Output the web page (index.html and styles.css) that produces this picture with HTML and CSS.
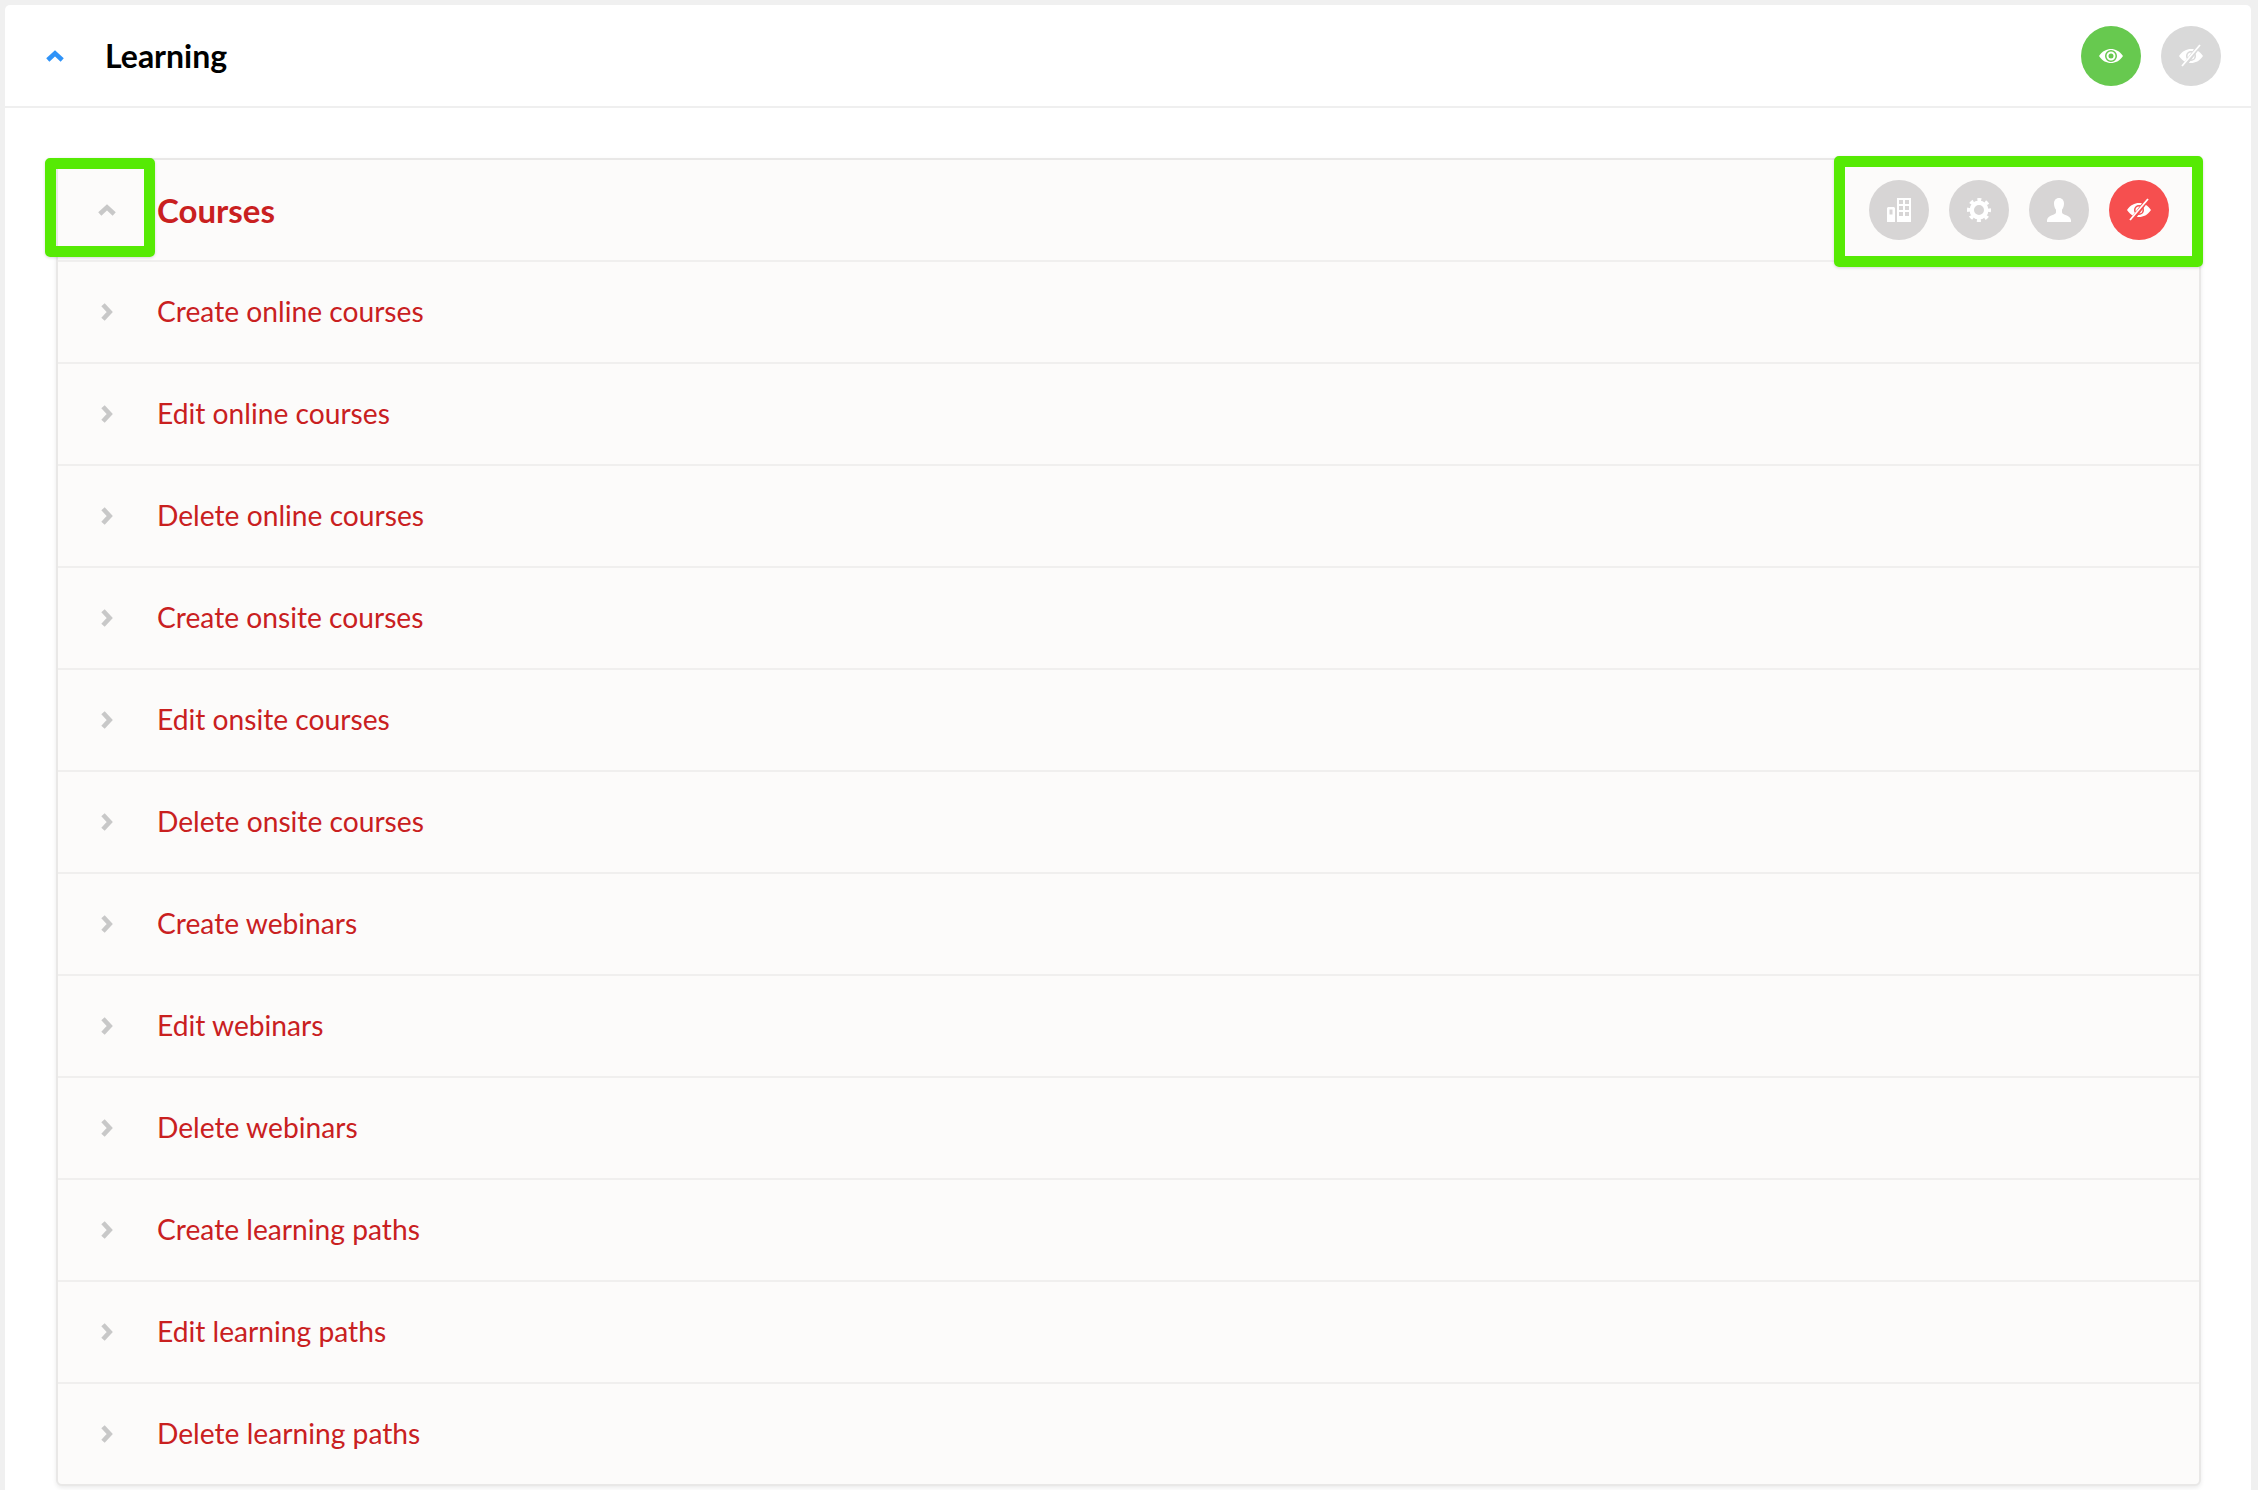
FILE: index.html

```html
<!DOCTYPE html>
<html lang="en">
<head>
    <meta charset="UTF-8">
    <meta name="viewport" content="width=device-width, initial-scale=1.0">
    <title>Learning permissions</title>
    <link rel="stylesheet" href="styles.css">
</head>
<body>
    <svg class="icon-defs" width="0" height="0">
        <symbol id="chevron-up" viewBox="0 0 18 12">
            <path d="M1.800 10L9 3.300l7.200 6.700" fill="none" stroke="currentColor" stroke-width="4.600"/>
        </symbol>
        <symbol id="chevron-right" viewBox="0 0 12 18">
            <path d="M2 1.800L8.700 9 2 16.200" fill="none" stroke="currentColor" stroke-width="4.600"/>
        </symbol>
        <symbol id="eye" viewBox="0 0 24 24">
            <path fill-rule="evenodd" d="M0 12C3.500 7 7.500 5 12 5S20.500 7 24 12C20.500 17 16.500 19 12 19S3.500 17 0 12zM12 6a6 6 0 1 0 0 12a6 6 0 1 0 0-12z"/>
            <path fill-rule="evenodd" d="M12 7.500a4.500 4.500 0 1 0 0 9a4.500 4.500 0 1 0 0-9zM12 9.500a2.500 2.500 0 1 1 0 5a2.500 2.500 0 1 1 0-5z"/>
        </symbol>
        <symbol id="eye-off" viewBox="0 0 24 24">
            <path fill-rule="evenodd" d="M0 12C3.500 7 7.500 5 12 5S20.500 7 24 12C20.500 17 16.500 19 12 19S3.500 17 0 12zM12 7a5 5 0 1 0 0 10a5 5 0 1 0 0-10z"/>
            <path d="M12 8.500a3.500 3.500 0 1 0 0 7a3.500 3.500 0 1 0 0-7z"/>
            <path class="slash-gap" d="M20 2L5 22"/>
            <path class="slash" d="M21 1L3 22"/>
        </symbol>
        <symbol id="building" viewBox="0 0 24 24">
            <path fill-rule="evenodd" d="M1 9h6l1 1v14H0V10zM2.500 11.500v5h3v-5zM10 0h14v24H10zM12 2v4h4V2zM18 2v4h4V2zM12 8v4h4V8zM18 8v4h4V8zM12 14v4h4v-4zM18 14v4h4v-4z"/>
        </symbol>
        <symbol id="gear" viewBox="0 0 24 24">
            <circle cx="12" cy="12" r="7.250" fill="none" stroke="currentColor" stroke-width="4.500"/>
            <circle class="gear-teeth" cx="12" cy="12" r="10.500" fill="none" stroke="currentColor" stroke-width="3"/>
        </symbol>
        <symbol id="person" viewBox="0 0 24 24">
            <path d="M12 0c3.200 0 5 2.400 5 5.500 0 2.500-.8 4.800-2 6.200v2.500c0 1.300 1.500 2 3.500 2.900 2.500 1 4.800 2 5.500 4.900v2H0v-2c.7-2.900 3-3.900 5.500-4.900C7.500 16.200 9 15.500 9 14.200v-2.500C7.800 10.300 7 8 7 5.500 7 2.400 8.800 0 12 0z"/>
        </symbol>
    </svg>

    <main class="card">
        <header class="card-header">
            <svg class="chevron chevron-blue"><use href="#chevron-up"/></svg>
            <h1 class="card-title">Learning</h1>
            <div class="toggles">
                <button class="toggle toggle-green"><svg><use href="#eye"/></svg></button>
                <button class="toggle toggle-muted"><svg><use href="#eye-off"/></svg></button>
            </div>
        </header>

        <section class="card-body">
            <div class="panel">
                <div class="row row-head">
                    <span class="row-arrow"><svg class="chevron chevron-grey"><use href="#chevron-up"/></svg></span>
                    <h2 class="row-title">Courses</h2>
                    <div class="row-toggles">
                        <button class="toggle toggle-grey"><svg><use href="#building"/></svg></button>
                        <button class="toggle toggle-grey"><svg><use href="#gear"/></svg></button>
                        <button class="toggle toggle-grey"><svg><use href="#person"/></svg></button>
                        <button class="toggle toggle-red"><svg><use href="#eye-off"/></svg></button>
                    </div>
                    <span class="highlight highlight-arrow"></span>
                    <span class="highlight highlight-toggles"></span>
                </div>
                <div class="row"><span class="row-arrow"><svg class="chevron-side"><use href="#chevron-right"/></svg></span><span class="row-label">Create online courses</span></div>
                <div class="row"><span class="row-arrow"><svg class="chevron-side"><use href="#chevron-right"/></svg></span><span class="row-label">Edit online courses</span></div>
                <div class="row"><span class="row-arrow"><svg class="chevron-side"><use href="#chevron-right"/></svg></span><span class="row-label">Delete online courses</span></div>
                <div class="row"><span class="row-arrow"><svg class="chevron-side"><use href="#chevron-right"/></svg></span><span class="row-label">Create onsite courses</span></div>
                <div class="row"><span class="row-arrow"><svg class="chevron-side"><use href="#chevron-right"/></svg></span><span class="row-label">Edit onsite courses</span></div>
                <div class="row"><span class="row-arrow"><svg class="chevron-side"><use href="#chevron-right"/></svg></span><span class="row-label">Delete onsite courses</span></div>
                <div class="row"><span class="row-arrow"><svg class="chevron-side"><use href="#chevron-right"/></svg></span><span class="row-label">Create webinars</span></div>
                <div class="row"><span class="row-arrow"><svg class="chevron-side"><use href="#chevron-right"/></svg></span><span class="row-label">Edit webinars</span></div>
                <div class="row"><span class="row-arrow"><svg class="chevron-side"><use href="#chevron-right"/></svg></span><span class="row-label">Delete webinars</span></div>
                <div class="row"><span class="row-arrow"><svg class="chevron-side"><use href="#chevron-right"/></svg></span><span class="row-label">Create learning paths</span></div>
                <div class="row"><span class="row-arrow"><svg class="chevron-side"><use href="#chevron-right"/></svg></span><span class="row-label">Edit learning paths</span></div>
                <div class="row"><span class="row-arrow"><svg class="chevron-side"><use href="#chevron-right"/></svg></span><span class="row-label">Delete learning paths</span></div>
            </div>
        </section>
    </main>
</body>
</html>
```

FILE: styles.css

```css
* {
    margin: 0;
    padding: 0;
    box-sizing: border-box;
    font-family: 'Lato', 'Open Sans', sans-serif;
}

html, body {
    height: 1490px;
    overflow: hidden;
}

body {
    background: #f0f0f0;
    padding: 5px 7px 0 5px;
}

.icon-defs {
    position: absolute;
}

.card {
    background: white;
    height: 1485px;
    border-radius: 5px 5px 0 0;
}

.card-header {
    height: 103px;
    padding: 0 30px 0 41px;
    display: flex;
    align-items: center;
    border-bottom: 2px solid #efefef;
}

.chevron {
    width: 18px;
    height: 12px;
}

.chevron-blue {
    color: #2f93f8;
}

.chevron-grey,
.chevron-side {
    color: #c8c8c8;
}

.chevron-side {
    width: 12px;
    height: 18px;
}

.card-title {
    margin-left: 41px;
    font-size: 32px;
    font-weight: 700;
    color: #000;
}

.toggles,
.row-toggles {
    margin-left: auto;
    display: flex;
    gap: 20px;
}

.toggle {
    width: 60px;
    height: 60px;
    border: none;
    border-radius: 50%;
    display: flex;
    align-items: center;
    justify-content: center;
    color: white;
}

.toggle svg {
    width: 24px;
    height: 24px;
    fill: currentColor;
}

.toggle-green { background: #67c94f; --toggle-bg: #67c94f; }
.toggle-muted { background: #d9d9d9; --toggle-bg: #d9d9d9; }
.toggle-grey { background: #d7d5d5; --toggle-bg: #d7d5d5; }
.toggle-red { background: #f64f4f; --toggle-bg: #f64f4f; }

.slash {
    fill: none;
    stroke: currentColor;
    stroke-width: 1.800;
}

.slash-gap {
    fill: none;
    stroke: var(--toggle-bg);
    stroke-width: 4;
}

.gear-teeth {
    stroke-dasharray: 4 4.250;
    stroke-dashoffset: 2;
}

.card-body {
    padding: 50px 50px 0 51px;
}

.panel {
    background: #fcfbfa;
    border: 2px solid #e9e8e7;
    border-radius: 0 0 6px 6px;
    box-shadow: 0 2px 4px rgba(0,0,0,0.08);
}

.row {
    height: 102px;
    padding-left: 40px;
    display: flex;
    align-items: center;
    border-bottom: 2px solid #f0efee;
}

.row:last-child {
    height: 100px;
    border-bottom: none;
}

.row-head {
    position: relative;
    padding-right: 30px;
}

.row-arrow {
    width: 18px;
    display: flex;
    justify-content: center;
}

.row-title {
    margin-left: 41px;
    font-size: 33px;
    font-weight: 700;
    color: #c9201f;
}

.row-label {
    margin: 0 0 3px 41px;
    font-size: 28.200px;
    color: #c9201f;
}

.highlight {
    position: absolute;
    border: 11px solid #56ea04;
    border-radius: 5px;
    box-shadow: 0 1px 3px rgba(0,0,0,0.15);
}

.highlight-arrow {
    left: -13px;
    top: -2px;
    width: 110px;
    height: 99px;
}

.highlight-toggles {
    right: -4px;
    top: -4px;
    width: 369px;
    height: 111px;
}
```
